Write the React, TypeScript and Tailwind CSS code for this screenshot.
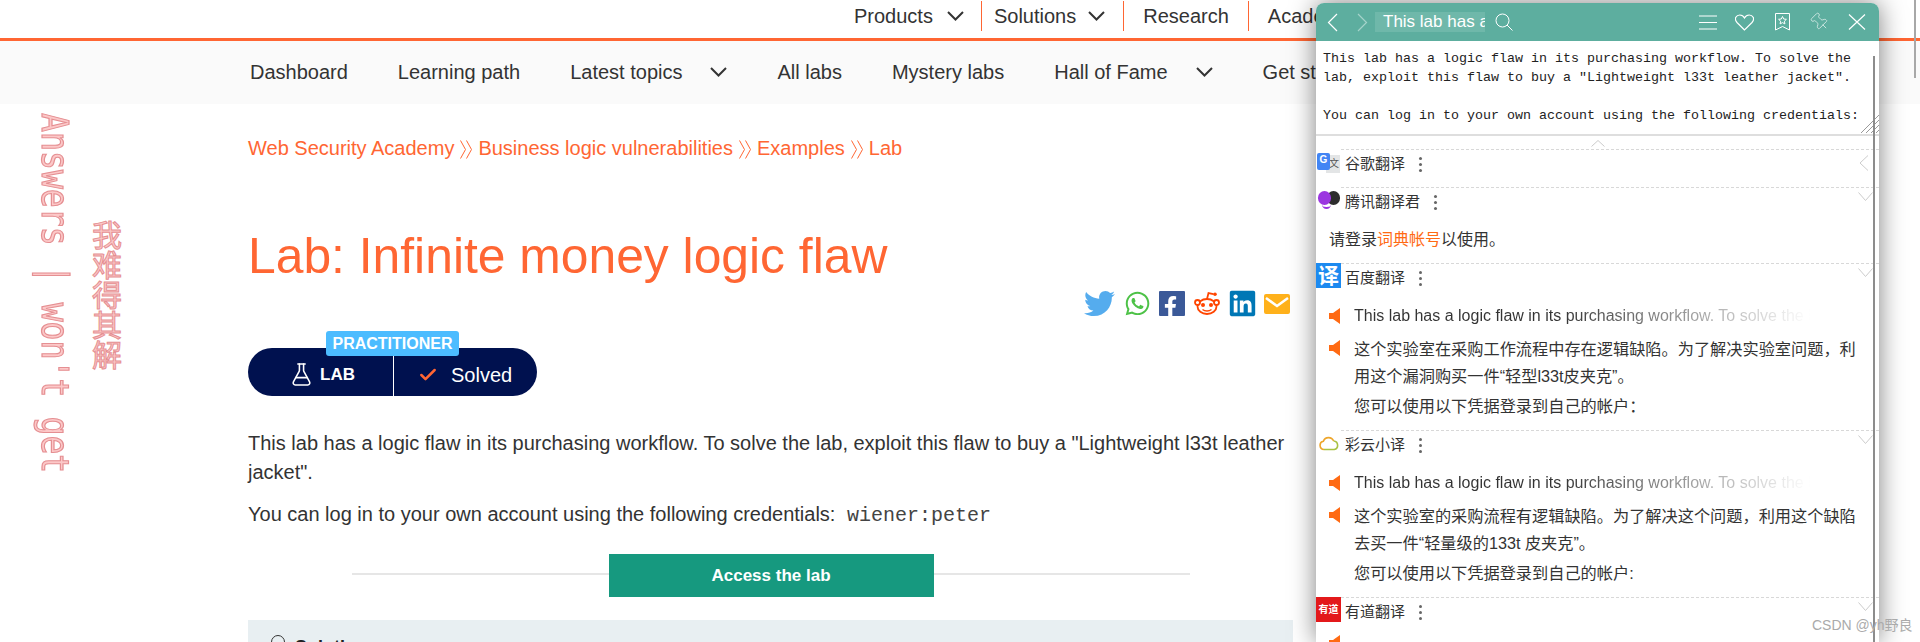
import React from 'react';
import { FlaskConical, Check, Pin } from 'lucide-react';
import { FaTwitter, FaWhatsapp, FaFacebookF, FaLinkedin } from 'react-icons/fa';

const SANS = 'font-["Liberation_Sans","Noto_Sans_CJK_SC",sans-serif]';

const NavChevron: React.FC = () => (
  <svg width="17" height="10" viewBox="0 0 17 10" fill="none" stroke="#333" strokeWidth="2" className="shrink-0">
    <path d="M1 1l7.5 7.500L16 1" />
  </svg>
);

const CrumbSep: React.FC = () => (
  <svg width="12" height="19" viewBox="0 0 12 19" fill="none" stroke="#ff6633" strokeWidth="1" className="mx-[6px] mt-[2px] shrink-0">
    <path d="M0.500 0.500l5 9-5 9M6.500 0.500l5 9-5 9" />
  </svg>
);

const Speaker: React.FC = () => (
  <svg width="11" height="16" viewBox="0 0 11 16" fill="#ff6a13" className="shrink-0">
    <path d="M0 5h4L11 0v16L4 11H0z" />
  </svg>
);

const Kebab: React.FC = () => (
  <div className="flex flex-col gap-[3px] ml-[14px]">
    <span className="w-[3px] h-[3px] rounded-full bg-[#666]" />
    <span className="w-[3px] h-[3px] rounded-full bg-[#666]" />
    <span className="w-[3px] h-[3px] rounded-full bg-[#666]" />
  </div>
);

const FoldDown: React.FC = () => (
  <svg width="15" height="10" viewBox="0 0 15 10" fill="none" stroke="#ccc" strokeWidth="1" className="ml-auto mr-[6px] -mt-[10px]">
    <path d="M0.500 0.500l7 8 7-8" />
  </svg>
);

const FoldLeft: React.FC = () => (
  <svg width="10" height="16" viewBox="0 0 10 16" fill="none" stroke="#ccc" strokeWidth="1" className="ml-auto mr-[10px] -mt-[2px]">
    <path d="M9 0.500L1 8l8 7.500" />
  </svg>
);

const GoogleIcon = () => (
  <div className="relative w-[25px] h-[22px] mt-[4px]">
    <div className="absolute left-[10px] top-[2px] w-[14px] h-[18px] bg-[#e3e5e6] text-[10px] leading-[18px] text-right pr-[1px] text-[#555]">文</div>
    <div className="absolute left-[1px] top-0 w-[13px] h-[17px] bg-[#4285f4] rounded-[2px] text-white text-[10px] font-bold leading-[14px] text-center">G</div>
  </div>
);

const TencentIcon = () => (
  <div className="relative w-[25px] h-[25px]">
    <div className="absolute left-[11px] top-[4px] w-[13px] h-[14px] rounded-full bg-[#2c2c2c]" />
    <div className="absolute left-[2px] top-[4px] w-[13px] h-[14px] rounded-full bg-[#9b36e0]" />
    <div className="absolute left-[6px] top-[17px] w-[9px] h-[5px] rounded-b-full border-b-2 border-[#9b36e0]" />
  </div>
);

const BaiduIcon = () => (
  <div className="w-[25px] h-[25px] bg-[#1c8af0] text-white text-[21px] font-bold leading-[25px] text-center">译</div>
);

const CaiyunIcon = () => (
  <div className="w-[25px] h-[25px] flex justify-center pt-[6px]">
    <svg width="20" height="15" viewBox="0 0 20 15" fill="none" strokeWidth="1.600">
      <path d="M5 13.500a4.200 4.200 0 0 1-.6-8.300A5.500 5.500 0 0 1 14.600 5" stroke="#eda52b" />
      <path d="M14.600 5a4.300 4.300 0 0 1 .6 8.500H5" stroke="#a9c242" />
    </svg>
  </div>
);

const YoudaoIcon = () => (
  <div className={'w-[25px] h-[25px] bg-[#e3191b] text-white text-[10px] font-bold leading-[25px] text-center font-["Liberation_Serif","Noto_Sans_CJK_SC",serif]'}>
    有道
  </div>
);

const EnglishLine: React.FC = () => (
  <div className="flex items-center pl-[13px] h-[24px]">
    <Speaker />
    <div className="ml-[14px] w-[456px] overflow-hidden whitespace-nowrap text-[16px] leading-[24px] bg-linear-to-r from-[#333] from-45% to-transparent to-100% bg-clip-text text-transparent">
      This lab has a logic flaw in its purchasing workflow. To solve the lab
    </div>
  </div>
);

const Translation: React.FC<{ lines: string[]; last: string }> = ({ lines, last }) => (
  <div className="mt-[8px] pl-[13px] flex">
    <div className="pt-[4px] w-[25px] shrink-0">
      <Speaker />
    </div>
    <div className="text-[16.2px] text-[#333] leading-[27px] w-[510px]">
      {lines.map((l) => (
        <div key={l} className="whitespace-nowrap">{l}</div>
      ))}
      <div className="mt-[3px] whitespace-nowrap">{last}</div>
    </div>
  </div>
);

const Section: React.FC<{
  name: string;
  icon: React.ReactNode;
  fold?: React.ReactNode;
  className?: string;
  children?: React.ReactNode;
}> = ({ name, icon, fold, className, children }) => (
  <div className={'border-t border-dashed border-[#d8d8d8] ' + (className || '')}>
    <div className="flex h-[29px]">
      <div className="w-[25px] h-[25px] -mt-px bg-white shrink-0">{icon}</div>
      <div className="flex items-center h-[28px] w-full">
        <span className="ml-[4px] text-[15px] text-[#333] whitespace-nowrap">{name}</span>
        <Kebab />
        {fold || <FoldDown />}
      </div>
    </div>
    {children}
  </div>
);

const Popup: React.FC = () => (
  <div className="absolute left-[1316px] top-[3px] w-[563px] h-[639px] bg-white rounded-t-[8px] shadow-[0_0_26px_rgba(0,0,0,0.5)] overflow-hidden">
    <div className="flex items-center h-[38px] bg-[#5dae9f] text-white">
      <svg width="11" height="19" viewBox="0 0 11 19" fill="none" stroke="#fff" strokeWidth="1.200" className="ml-[11px]">
        <path d="M10 1L1.500 9.500 10 18" />
      </svg>
      <svg width="11" height="19" viewBox="0 0 11 19" fill="none" stroke="#a5d3ca" strokeWidth="1.200" className="ml-[19px]">
        <path d="M1 1l8.500 8.500L1 18" />
      </svg>
      <div className="ml-[7px] w-[110px] h-[20px] pl-[8px] bg-[#6fb8aa] text-[17px] leading-[20px] overflow-hidden whitespace-nowrap">
        This lab has a logic flaw
      </div>
      <svg width="18" height="18" viewBox="0 0 18 18" fill="none" stroke="#fff" strokeWidth="1" className="ml-[10px]">
        <circle cx="7.500" cy="7.500" r="6.500" />
        <path d="M12 12l5.500 5.500" />
      </svg>
      <svg width="18" height="15" viewBox="0 0 18 15" fill="none" stroke="#fff" strokeWidth="1" className="ml-[186px]">
        <path d="M0 1h18M0 7.500h18M0 14h18" />
      </svg>
      <svg width="19" height="17" viewBox="0 0 19 17" fill="none" stroke="#fff" strokeWidth="1.200" className="ml-[18px]">
        <path d="M9.500 16L2 8.500C-1.500 4.500 1.500 1 4.800 1c2 0 3.600 1 4.700 3 1.100-2 2.700-3 4.700-3C17.500 1 20.500 4.500 17 8.500z" />
      </svg>
      <svg width="15" height="18" viewBox="0 0 15 18" fill="none" stroke="#fff" strokeWidth="1" className="ml-[21px]">
        <path d="M0.500 0.500h14v16.500l-7-3.500-7 3.500z" />
        <path d="M7.500 3.500l1.200 2.500 2.700.300-2 1.900.5 2.700-2.400-1.300-2.400 1.300.5-2.700-2-1.900 2.700-.3z" />
      </svg>
      <Pin size={20} strokeWidth={1} color="#d5ebe6" className="ml-[20px] -rotate-45" />
      <svg width="18" height="16" viewBox="0 0 18 16" fill="none" stroke="#fff" strokeWidth="1.200" className="ml-[18px]">
        <path d="M1 0.500l16 15M17 0.500l-16 15" />
      </svg>
    </div>

    <div className='relative h-[95px] pt-[8px] pl-[7px] border-b-2 border-[#dedede] font-["Liberation_Mono",monospace] text-[13.33px] leading-[19px] text-[#222] whitespace-pre'>
      {'This lab has a logic flaw in its purchasing workflow. To solve the\nlab, exploit this flaw to buy a "Lightweight l33t leather jacket".\n\nYou can log in to your own account using the following credentials:'}
      <svg width="18" height="18" viewBox="0 0 18 18" fill="none" stroke="#999" strokeWidth="1" className="absolute right-0 bottom-[1px]">
        <path d="M0 18L18 0M5 18L18 5M10 18l8-8M15 18l3-3" />
      </svg>
    </div>

    <div className="flex justify-center h-[13px] pt-[4px]">
      <svg width="14" height="7" viewBox="0 0 14 7" fill="none" stroke="#ccc" strokeWidth="1">
        <path d="M0.500 6.500L7 0.500l6.500 6" />
      </svg>
    </div>

    <Section name="谷歌翻译" icon={<GoogleIcon />} fold={<FoldLeft />} className="h-[38px]" />

    <Section name="腾讯翻译君" icon={<TencentIcon />} className="h-[76px]">
      <div className="mt-[11px] pl-[13px] text-[16px] leading-[24px] text-[#333]">
        请登录<span className="text-[#ff6a13]">词典帐号</span>以使用。
      </div>
    </Section>

    <Section name="百度翻译" icon={<BaiduIcon />} className="h-[167px]">
      <div className="mt-[11px]">
        <EnglishLine />
        <Translation
          lines={['这个实验室在采购工作流程中存在逻辑缺陷。为了解决实验室问题，利', '用这个漏洞购买一件“轻型l33t皮夹克”。']}
          last="您可以使用以下凭据登录到自己的帐户："
        />
      </div>
    </Section>

    <Section name="彩云小译" icon={<CaiyunIcon />} className="h-[167px]">
      <div className="mt-[11px]">
        <EnglishLine />
        <Translation
          lines={['这个实验室的采购流程有逻辑缺陷。为了解决这个问题，利用这个缺陷', '去买一件“轻量级的133t 皮夹克”。']}
          last="您可以使用以下凭据登录到自己的帐户:"
        />
      </div>
    </Section>

    <Section name="有道翻译" icon={<YoudaoIcon />}>
      <div className="mt-[8px] pl-[13px]">
        <Speaker />
      </div>
    </Section>

    <div className="absolute left-[557px] top-[53px] bottom-0 w-[2px] bg-[#8c8c8c]" />
  </div>
);

const RedditIcon: React.FC = () => (
  <svg width="26" height="25" viewBox="0 0 26 25" fill="none" stroke="#ff4500" strokeWidth="1.800" className="ml-[9px]">
    <ellipse cx="13" cy="15.500" rx="9.500" ry="7.500" fill="#fff" />
    <circle cx="3.500" cy="11.500" r="2.500" fill="#fff" />
    <circle cx="22.500" cy="11.500" r="2.500" fill="#fff" />
    <path d="M13 8l1.500-6 5 1.200" />
    <circle cx="21" cy="3.200" r="1.800" fill="#ff4500" stroke="none" />
    <circle cx="9" cy="14" r="2" fill="#ff4500" stroke="none" />
    <circle cx="17" cy="14" r="2" fill="#ff4500" stroke="none" />
    <path d="M8.500 18.500c2.500 2 6.500 2 9 0" strokeWidth="1.300" />
  </svg>
);

const ShareIcons: React.FC = () => (
  <div className="flex items-center h-[25px] ml-[836px]">
    <FaTwitter size={31} color="#55acee" />
    <FaWhatsapp size={27} color="#4dc247" className="ml-[9px]" />
    <div className="ml-[8px] w-[26px] h-[25px] bg-[#3b5998] rounded-[1px] flex items-end justify-end overflow-hidden pr-[4px]">
      <FaFacebookF size={21} color="#fff" className="-mb-[1px]" />
    </div>
    <RedditIcon />
    <FaLinkedin size={29} color="#0077b5" className="ml-[8px]" />
    <svg width="26" height="20" viewBox="0 0 26 20" className="ml-[7px]">
      <rect width="26" height="20" rx="2" fill="#ffb11b" />
      <path d="M2 4l11 8 11-8" fill="none" stroke="#fff" strokeWidth="2.500" />
    </svg>
  </div>
);

const LabPill: React.FC = () => (
  <div className="relative mt-[32px] w-[289px] h-[48px] rounded-full bg-[#00114f] flex items-center text-white">
    <div className="absolute left-[78px] -top-[17px] w-[133px] h-[25px] rounded-[3px] bg-[#4cbcff] text-[16px] font-bold leading-[25px] text-center">
      PRACTITIONER
    </div>
    <div className="w-[146px] h-full flex items-center pl-[41px] pt-[5px] border-r border-white">
      <FlaskConical size={25} strokeWidth={1.500} />
      <span className="ml-[6px] text-[17px] font-bold">LAB</span>
    </div>
    <Check size={20} strokeWidth={3} color="#ff6633" className="ml-[24px] mt-[5px]" />
    <span className="ml-[13px] mt-[5px] text-[20px]">Solved</span>
  </div>
);

const App: React.FC = () => {
  return (
    <div className={'relative w-[1920px] h-[642px] overflow-hidden bg-white text-[#333] ' + SANS}>
      <header>
        <nav className="flex items-center h-[38px] pl-[854px] pb-[6px] text-[20px] whitespace-nowrap">
          <span>Products</span>
          <span className="ml-[14px]"><NavChevron /></span>
          <span className="ml-[17px] h-[30px] border-l border-[#ff6633]" />
          <span className="ml-[12px]">Solutions</span>
          <span className="ml-[12px]"><NavChevron /></span>
          <span className="ml-[18px] h-[30px] border-l border-[#ff6633]" />
          <span className="ml-[19px]">Research</span>
          <span className="ml-[19px] h-[30px] border-l border-[#ff6633]" />
          <span className="ml-[19px]">Academy</span>
        </nav>
        <div className="h-[3px] bg-[#ff6633]" />
        <nav className="flex items-center gap-[50px] h-[63px] pl-[250px] pb-[2px] bg-[#fafafa] text-[20px] whitespace-nowrap">
          <span>Dashboard</span>
          <span>Learning path</span>
          <span className="flex items-center gap-[28px]">Latest topics <NavChevron /></span>
          <span>All labs</span>
          <span>Mystery labs</span>
          <span className="flex items-center gap-[28px]">Hall of Fame <NavChevron /></span>
          <span>Get started</span>
        </nav>
      </header>

      <main className="pl-[248px] pt-[32px] w-[1293px]">
        <div className="flex items-center text-[20px] leading-[24px] text-[#ff6633]">
          Web Security Academy <CrumbSep /> Business logic vulnerabilities <CrumbSep /> Examples <CrumbSep /> Lab
        </div>
        <h1 className="mt-[66px] text-[49.8px] leading-[60px] text-[#ff6633]">Lab: Infinite money logic flaw</h1>
        <div className="mt-[5px]">
          <ShareIcons />
        </div>
        <LabPill />
        <div className="mt-[33px] text-[20px] leading-[29px]">
          <p className="mb-[13px]">
            This lab has a logic flaw in its purchasing workflow. To solve the lab, exploit this flaw to buy a "Lightweight l33t leather jacket".
          </p>
          <p>
            You can log in to your own account using the following credentials:{' '}
            <code className='ml-[6px] font-["Liberation_Mono",monospace] text-[20px] text-[#444]'>wiener:peter</code>
          </p>
        </div>
        <div className="mt-[24px] ml-[104px] w-[838px] flex items-center">
          <div className="flex-1 h-[2px] mb-[3px] bg-[#e6e6e6]" />
          <div className="w-[325px] h-[43px] bg-[#16997f] text-white text-[17px] font-bold leading-[43px] text-center">
            Access the lab
          </div>
          <div className="flex-1 h-[2px] mb-[3px] bg-[#e6e6e6]" />
        </div>
        <div className="mt-[23px] h-[60px] bg-[#e8eff2] pl-[23px] pt-[14px] flex items-start font-bold text-[18px] text-[#222]">
          <span className="mt-[1px] w-[14px] h-[14px] rounded-full border border-[#333]" />
          <span className="ml-[10px]">Solution</span>
        </div>
      </main>

      <div className='absolute left-[32px] top-[113px] [writing-mode:vertical-rl] text-[31.5px] leading-[38px] whitespace-pre origin-left scale-x-[1.2] font-["DejaVu_Sans_Mono",monospace] text-[#fcc8c8] [-webkit-text-stroke:1px_#e58f92]'>
        Answers | won't get
      </div>
      <div className='absolute left-[90px] top-[220px] [writing-mode:vertical-rl] text-[30px] leading-[34px] font-["Noto_Sans_CJK_SC",sans-serif] text-[#fcc8c8] [-webkit-text-stroke:1px_#e58f92]'>
        我难得其解
      </div>

      <div className="absolute left-[1914px] top-0 h-[78px] w-[2px] bg-[#a8a8a8]" />
      <Popup />
      <div className="absolute left-[1812px] top-[615px] text-[14px] leading-[20px] text-[#aaa]">CSDN @yh野良</div>
    </div>
  );
};

export default App;
